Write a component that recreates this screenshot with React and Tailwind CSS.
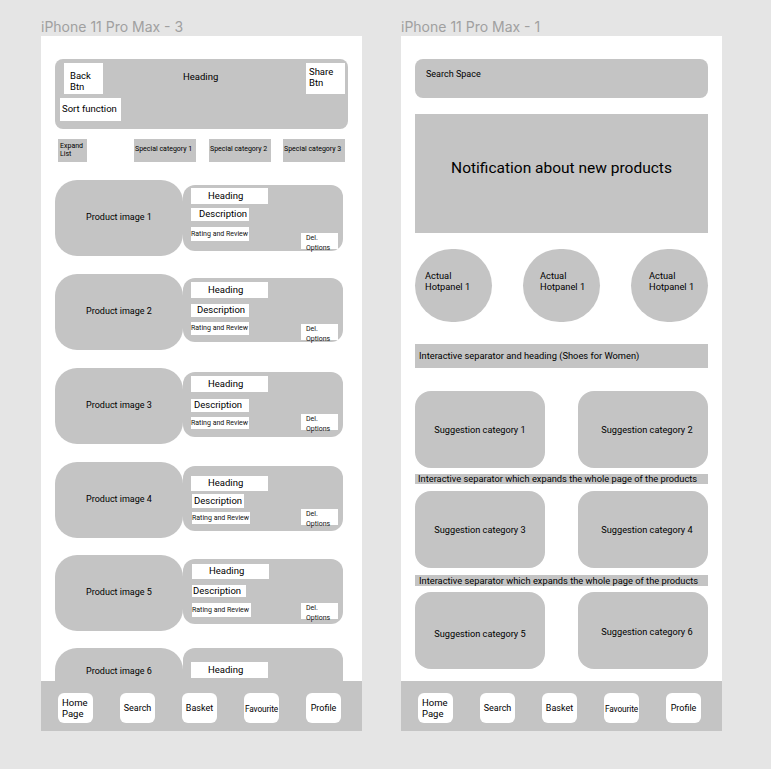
import React from "react";

const products = [
  { n: 1, gap: "mt-[18px]", img: "items-center", box: "mt-[5px] h-[66px]", head: "mt-[3px] h-[16px]", desc: "mt-[4px] w-[58px] h-[13px] pl-[8px]", rate: "mt-[6px] h-[14px] w-[58px]", del: "mb-[2px]" },
  { n: 2, gap: "mt-[18px]", img: "items-center", box: "mt-[4px] h-[64px]", head: "mt-[4px] h-[16px]", desc: "mt-[6px] w-[58px] h-[13px] pl-[6px]", rate: "mt-[5px] h-[13px] w-[58px]", del: "mb-[2px]" },
  { n: 3, gap: "mt-[18px]", img: "items-center", box: "mt-[4px] h-[65px]", head: "mt-[4px] h-[16px]", desc: "mt-[7px] w-[58px] h-[13px] pl-[3px]", rate: "mt-[5px] h-[12px] w-[58px]", del: "mb-[7px]" },
  { n: 4, gap: "mt-[18px]", img: "items-center", box: "mt-[4px] h-[65px]", head: "mt-[10px] h-[15px]", desc: "mt-[3px] w-[52px] h-[14px] pl-[2px] ml-[1px]", rate: "mt-[4px] h-[12px] w-[58px] ml-[1px]", del: "mb-[6px]" },
  { n: 5, gap: "mt-[17px]", img: "items-center", box: "mt-[4px] h-[65px]", head: "mt-[5px] h-[15px] ml-[1px]", desc: "mt-[6px] w-[54px] h-[12px] pl-[1px] ml-[1px]", rate: "mt-[6px] h-[14px] w-[59px] ml-[1px]", del: "mb-[5px]" },
];

const hotpanels = ["pl-[10px]", "pl-[17px]", "pl-[18px]"];

function Title({ children }) {
  return (
    <div className="h-[19px] leading-[19px] text-[14px] text-[#a0a0a0] font-['Inter',sans-serif]">{children}</div>
  );
}

function NavBar() {
  const items = [
    { label: "Search", cls: "text-[9px]" },
    { label: "Basket", cls: "text-[9px]" },
    { label: "Favourite", cls: "text-[8.3px] tracking-[-0.1px]" },
    { label: "Profile", cls: "text-[9px]" },
  ];
  return (
    <div className="h-[50px] shrink-0 bg-[#c4c4c4] flex items-start pt-[12px] pl-[17px] gap-[27px]">
      <div className="w-[35px] h-[30px] bg-white rounded-[6px] pl-[4px] pt-[4px] text-[9.5px] leading-[11px]">
        Home
        <br />
        Page
      </div>
      {items.map((it) => (
        <div
          key={it.label}
          className={`w-[35px] h-[30px] bg-white rounded-[6px] flex items-center justify-center pt-[2px] whitespace-nowrap ${it.cls}`}
        >
          {it.label}
        </div>
      ))}
    </div>
  );
}

function ProductCard({ p }) {
  return (
    <div className={`${p.gap} ml-[14px] flex items-start`}>
      <div className={`w-[128px] h-[76px] shrink-0 bg-[#c4c4c4] rounded-[22px] flex justify-center text-[9px] ${p.img}`}>
        Product image {p.n}
      </div>
      <div className={`${p.box} w-[160px] bg-[#c4c4c4] rounded-[12px] flex pl-[8px] pr-[5px]`}>
        <div className="flex flex-col">
          <div className={`${p.head} w-[77px] bg-white pl-[17px] flex items-center text-[9.5px]`}>Heading</div>
          <div className={`${p.desc} bg-white flex items-center text-[9.5px] whitespace-nowrap`}>Description</div>
          <div className={`${p.rate} bg-white flex items-center text-[7px] text-[#111] whitespace-nowrap`}>Rating and Review</div>
        </div>
        <div className={`${p.del} ml-auto self-end w-[37px] h-[16px] bg-white pl-[5px] text-[7px] text-[#111] leading-[10px]`}>
          Del.
          <br />
          Options
        </div>
      </div>
    </div>
  );
}

// last card sits under the nav bar, only its top part shows
function PartialCard() {
  return (
    <div className="mt-[17px] ml-[14px] flex items-start">
      <div className="w-[128px] h-[76px] shrink-0 bg-[#c4c4c4] rounded-[22px] flex justify-center pt-[17px] text-[9px]">
        Product image 6
      </div>
      <div className="w-[160px] h-[65px] bg-[#c4c4c4] rounded-[12px] pl-[8px] pt-[14px]">
        <div className="w-[77px] h-[16px] bg-white pl-[17px] flex items-center text-[9.5px]">Heading</div>
      </div>
    </div>
  );
}

function ListScreen() {
  const specials = [
    { label: "Special category 1", cls: "ml-[47px]" },
    { label: "Special category 2", cls: "ml-[13px]" },
    { label: "Special category 3", cls: "ml-[12px]" },
  ];
  return (
    <div className="w-[321px] h-[695px] bg-white flex flex-col">
      <div className="flex-1 overflow-hidden pt-[23px]">
        <div className="mx-[14px] h-[70px] bg-[#c4c4c4] rounded-[8px] flex items-start text-[9.5px]">
          <div className="flex flex-col pl-[5px] pt-[4px]">
            <div className="ml-[4px] w-[39px] h-[31px] bg-white pl-[6px] pt-[7px] leading-[11px]">
              Back
              <br />
              Btn
            </div>
            <div className="mt-[4px] w-[61px] h-[23px] bg-white pl-[2px] flex items-center">Sort function</div>
          </div>
          <div className="ml-[62px] mt-[12px] leading-[11px]">Heading</div>
          <div className="ml-auto mr-[3px] mt-[4px] w-[39px] h-[31px] bg-white pl-[3px] pt-[3px] leading-[11px]">
            Share
            <br />
            Btn
          </div>
        </div>

        <div className="mt-[10px] ml-[17px] flex items-start text-[7px]">
          <div className="w-[29px] h-[23px] bg-[#c4c4c4] pl-[2px] pt-[3px] leading-[8px]">
            Expand
            <br />
            List
          </div>
          {specials.map((s) => (
            <div key={s.label} className={`${s.cls} w-[62px] h-[23px] bg-[#c4c4c4] pl-[1px] pt-[5px] whitespace-nowrap`}>
              {s.label}
            </div>
          ))}
        </div>

        {products.map((p) => (
          <ProductCard key={p.n} p={p} />
        ))}
        <PartialCard />
      </div>
      <NavBar />
    </div>
  );
}

function Separator({ cls, children }) {
  return (
    <div className={`${cls} mx-[14px] bg-[#c4c4c4] flex items-center text-[9.3px] whitespace-nowrap`}>
      {children}
    </div>
  );
}

function SuggestionRow({ cls, a, b, textA = "", textB = "" }) {
  return (
    <div className={`${cls} mx-[14px] h-[77px] flex justify-between`}>
      <div className={`w-[130px] bg-[#c4c4c4] rounded-[16px] flex items-center justify-center text-[9.2px] ${textA}`}>
        Suggestion category {a}
      </div>
      <div className={`w-[130px] bg-[#c4c4c4] rounded-[16px] flex items-center justify-center text-[9.2px] ${textB}`}>
        Suggestion category {b}
      </div>
    </div>
  );
}

function HomeScreen() {
  return (
    <div className="w-[321px] h-[695px] bg-white flex flex-col">
      <div className="flex-1 overflow-hidden pt-[23px]">
        <div className="mx-[14px] h-[39px] bg-[#c4c4c4] rounded-[8px] pl-[11px] pt-[10px] text-[9px] leading-[11px]">
          Search Space
        </div>
        <div className="mt-[16px] mx-[14px] h-[119px] bg-[#c4c4c4] flex items-center justify-center pb-[10px] text-[15.5px]">
          Notification about new products
        </div>
        <div className="mt-[16px] mx-[14px] flex justify-between">
          {hotpanels.map((pl, i) => (
            <div key={i} className={`w-[77px] h-[73px] rounded-full bg-[#c4c4c4] pt-[21px] text-[9.3px] leading-[11px] ${pl}`}>
              Actual
              <br />
              Hotpanel 1
            </div>
          ))}
        </div>
        <Separator cls="mt-[22px] h-[24px] pl-[4px]">Interactive separator and heading (Shoes for Women)</Separator>
        <SuggestionRow cls="mt-[23px]" a={1} b={2} textB="pl-[8px]" />
        <Separator cls="mt-[6px] h-[10px] pl-[3px]">Interactive separator which expands the whole page of the products</Separator>
        <SuggestionRow cls="mt-[7px]" a={3} b={4} textB="pl-[8px]" />
        <Separator cls="mt-[7px] h-[11px] pl-[4px]">Interactive separator which expands the whole page of the products</Separator>
        <SuggestionRow cls="mt-[6px]" a={5} b={6} textA="pt-[7px]" textB="pl-[8px] pt-[3px]" />
      </div>
      <NavBar />
    </div>
  );
}

export default function App() {
  return (
    <div className="w-[771px] h-[769px] bg-[#e5e5e5] flex gap-[39px] pl-[41px] pt-[17px] font-['Roboto',sans-serif] text-black overflow-hidden">
      <div className="flex flex-col">
        <Title>iPhone 11 Pro Max - 3</Title>
        <ListScreen />
      </div>
      <div className="flex flex-col">
        <Title>iPhone 11 Pro Max - 1</Title>
        <HomeScreen />
      </div>
    </div>
  );
}
